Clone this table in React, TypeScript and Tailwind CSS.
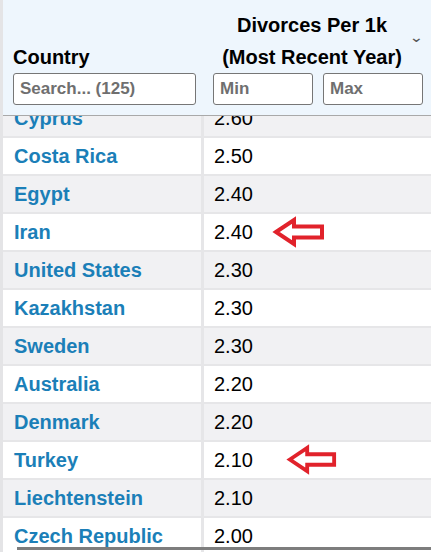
import React from "react";

type Row = {
  country: string;
  value: string;
  arrow?: "iran" | "turkey";
};

const rows: Row[] = [
  { country: "Cyprus", value: "2.60" },
  { country: "Costa Rica", value: "2.50" },
  { country: "Egypt", value: "2.40" },
  { country: "Iran", value: "2.40", arrow: "iran" },
  { country: "United States", value: "2.30" },
  { country: "Kazakhstan", value: "2.30" },
  { country: "Sweden", value: "2.30" },
  { country: "Australia", value: "2.20" },
  { country: "Denmark", value: "2.20" },
  { country: "Turkey", value: "2.10", arrow: "turkey" },
  { country: "Liechtenstein", value: "2.10" },
  { country: "Czech Republic", value: "2.00" },
];

const Arrow = ({ className }: { className: string }) => (
  <svg
    className={className}
    viewBox="0 0 54 32"
    fill="none"
    stroke="#e1222b"
    strokeWidth="4"
    strokeLinejoin="miter"
  >
    <polygon points="4,16 22,4 22,10.5 50,10.5 50,21.5 22,21.5 22,28" />
  </svg>
);

const App = () => {
  return (
    <div className="w-[431px] h-[552px] overflow-hidden bg-white font-['Liberation_Sans',Arial,sans-serif] border-l-[3px] border-[#e4e4e6] relative">
      {/* header */}
      <div className="h-[116px] bg-[#eef6fd] border-b border-[#a9a9a9] flex">
        <div className="w-[201px] shrink-0 flex flex-col justify-end pl-[10px] pr-[8px] pb-[10px]">
          <div className="text-[20px] font-bold text-black leading-[32px]">Country</div>
          <input
            className="h-[32px] w-full border border-[#767676] rounded-[3px] bg-white px-[6px] text-[17px] font-bold placeholder:text-[#6f6f6f] outline-none"
            placeholder="Search... (125)"
          />
        </div>
        <div className="flex-1 flex flex-col justify-end pl-[9px] pb-[10px] relative">
          <div className="text-[20px] font-bold text-black leading-[32px] text-center w-[198px] pt-[3px]">
            Divorces Per 1k
            <br />
            (Most Recent Year)
          </div>
          <span className="absolute left-[206px] top-[30px] text-[#555] text-[14px] leading-none scale-x-125">⌄</span>
          <div className="flex gap-[10px]">
            <input
              className="h-[32px] w-[100px] border border-[#767676] rounded-[3px] bg-white px-[6px] text-[17px] font-bold placeholder:text-[#6f6f6f] outline-none"
              placeholder="Min"
            />
            <input
              className="h-[32px] w-[100px] border border-[#767676] rounded-[3px] bg-white px-[6px] text-[17px] font-bold placeholder:text-[#6f6f6f] outline-none"
              placeholder="Max"
            />
          </div>
        </div>
      </div>

      {/* body */}
      <div className="h-[436px] overflow-hidden">
        <div className="-mt-[16px]">
          {rows.map((row, i) => (
            <div
              key={row.country}
              className={`h-[38px] flex border-b-2 border-[#e6e6e8] ${i % 2 === 0 ? "bg-[#f1f1f3]" : "bg-white"}`}
            >
              <div className="w-[201px] shrink-0 flex items-center pl-[11px] border-r-[3px] border-[#e6e6e8] text-[20px] font-bold text-[#1b7fb8]">
                {row.country}
              </div>
              <div className="flex-1 flex items-center pl-[10px] text-[20px] text-black relative">
                {row.value}
                {row.arrow === "iran" && (
                  <Arrow className="absolute left-[68px] top-[2px] w-[54px] h-[32px]" />
                )}
                {row.arrow === "turkey" && (
                  <Arrow className="absolute left-[82px] top-[0px] w-[52px] h-[35px]" />
                )}
              </div>
            </div>
          ))}
        </div>
      </div>

      {/* horizontal scroll indicator */}
      <div className="absolute left-[14px] right-0 bottom-[2px] h-[3px] bg-[#7d7d7d]" />
    </div>
  );
};

export default App;
